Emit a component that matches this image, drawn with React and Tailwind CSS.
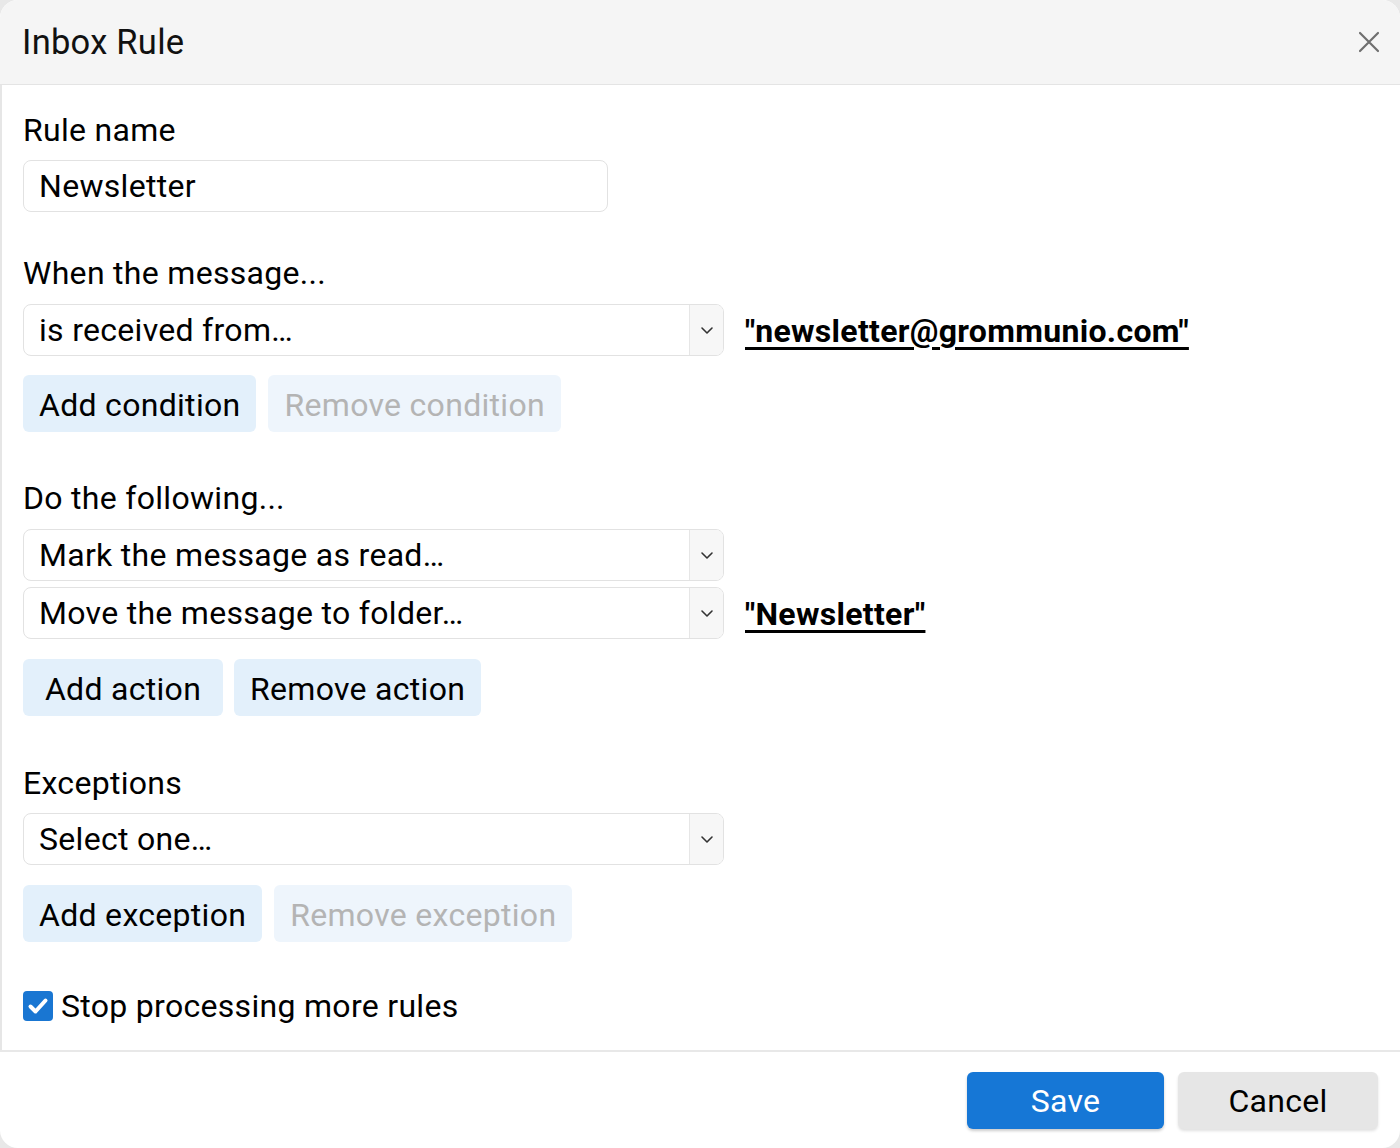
import React from "react";

const font = { fontFamily: "Roboto, 'Noto Sans', Arial, sans-serif" };

function Chevron() {
  return (
    <svg width="14" height="9" viewBox="0 0 14 9" fill="none">
      <path d="M2 2l5 5 5-5" stroke="#333" strokeWidth="1.6" strokeLinecap="round" strokeLinejoin="round" />
    </svg>
  );
}

function Select({ value, className = "" }) {
  return (
    <div className={"flex h-[52px] w-[701px] items-stretch overflow-hidden rounded-[8px] border border-[#e2e2e2] bg-white " + className}>
      <div className="flex flex-1 items-center pl-[15px] text-[32px] leading-none tracking-[0.00938em] text-black">{value}</div>
      <div className="flex w-[34px] items-center justify-center border-l border-[#e6e6e6] bg-[#f7f7f7]">
        <Chevron />
      </div>
    </div>
  );
}

function Btn({ children, disabled }) {
  return (
    <div
      className={
        "flex h-[57px] min-w-[200px] items-center justify-center rounded-[6px] px-[16px] pt-[2px] text-[32px] leading-none tracking-[0.00938em] " +
        (disabled ? "bg-[#eef5fc] text-[#b4b4b4]" : "bg-[#e3f0fb] text-black")
      }
    >
      {children}
    </div>
  );
}

function Label({ children, className = "" }) {
  return <div className={"h-[36px] text-[32px] leading-[36px] tracking-[0.00938em] text-black " + className}>{children}</div>;
}

export default function App() {
  return (
    <div className="h-[1148px] w-[1400px] bg-[#e8e8e8]" style={font}>
      <div className="flex h-full w-full flex-col overflow-hidden rounded-[18px] bg-white">
        <div className="flex h-[85px] shrink-0 items-center justify-between border-b border-[#e4e4e4] bg-[#f5f5f5] pl-[22px] pr-[20px]">
          <div className="text-[34.5px] leading-none tracking-[0.0075em] text-[#111]">Inbox Rule</div>
          <svg width="22" height="22" viewBox="0 0 22 22" fill="none">
            <path d="M2 2l18 18M20 2L2 20" stroke="#6f6f6f" strokeWidth="2.2" strokeLinecap="round" />
          </svg>
        </div>

        <div className="flex flex-1 flex-col border-l-2 border-[#e6e6e6] pl-[21px] pt-[27px]">
          <Label>Rule name</Label>
          <div className="mt-[12px] flex h-[52px] w-[585px] items-center rounded-[8px] border border-[#e2e2e2] pl-[15px] text-[32px] leading-none tracking-[0.00938em] text-black">
            Newsletter
          </div>

          <Label className="mt-[43px]">When the message...</Label>
          <div className="mt-[13px] flex items-center gap-[21px]">
            <Select value="is received from…" />
            <a className="pt-[2px] text-[32px] font-bold leading-none tracking-[0.00938em] text-black underline decoration-[3px] underline-offset-[5px]">
              "newsletter@grommunio.com"
            </a>
          </div>
          <div className="mt-[19px] flex gap-[12px]">
            <Btn>Add condition</Btn>
            <Btn disabled>Remove condition</Btn>
          </div>

          <Label className="mt-[48px]">Do the following...</Label>
          <div className="mt-[13px] flex items-center gap-[21px]">
            <Select value="Mark the message as read…" />
          </div>
          <div className="mt-[6px] flex items-center gap-[21px]">
            <Select value="Move the message to folder…" />
            <a className="pt-[2px] text-[32px] font-bold leading-none tracking-[0.00938em] text-black underline decoration-[3px] underline-offset-[5px]">
              "Newsletter"
            </a>
          </div>
          <div className="mt-[20px] flex gap-[11px]">
            <Btn>Add action</Btn>
            <Btn>Remove action</Btn>
          </div>

          <Label className="mt-[49px]">Exceptions</Label>
          <div className="mt-[12px] flex items-center">
            <Select value="Select one…" />
          </div>
          <div className="mt-[20px] flex gap-[12px]">
            <Btn>Add exception</Btn>
            <Btn disabled>Remove exception</Btn>
          </div>

          <div className="mt-[48px] flex items-center gap-[8px]">
            <div className="flex h-[30px] w-[30px] items-center justify-center rounded-[4px] bg-[#1976d2]">
              <svg width="24" height="24" viewBox="0 0 24 24" fill="none">
                <path d="M4.5 12.5l5 5L19.5 6.5" stroke="white" strokeWidth="4" strokeLinecap="round" strokeLinejoin="round" />
              </svg>
            </div>
            <div className="text-[32px] leading-none tracking-[0.00938em] text-black">Stop processing more rules</div>
          </div>
        </div>

        <div className="flex h-[98px] shrink-0 items-center justify-end gap-[14px] border-t-2 border-[#e8e8e8] pr-[22px]">
          <div className="flex h-[57px] w-[197px] items-center justify-center rounded-[6px] bg-[#1677d6] pt-[2px] text-[32px] leading-none tracking-[0.00938em] text-white shadow-[0_2px_3px_rgba(0,0,0,0.2)]">
            Save
          </div>
          <div className="flex h-[57px] w-[200px] items-center justify-center rounded-[6px] bg-[#e6e6e6] pt-[2px] text-[32px] leading-none tracking-[0.00938em] text-black shadow-[0_2px_3px_rgba(0,0,0,0.12)]">
            Cancel
          </div>
        </div>
      </div>
    </div>
  );
}
